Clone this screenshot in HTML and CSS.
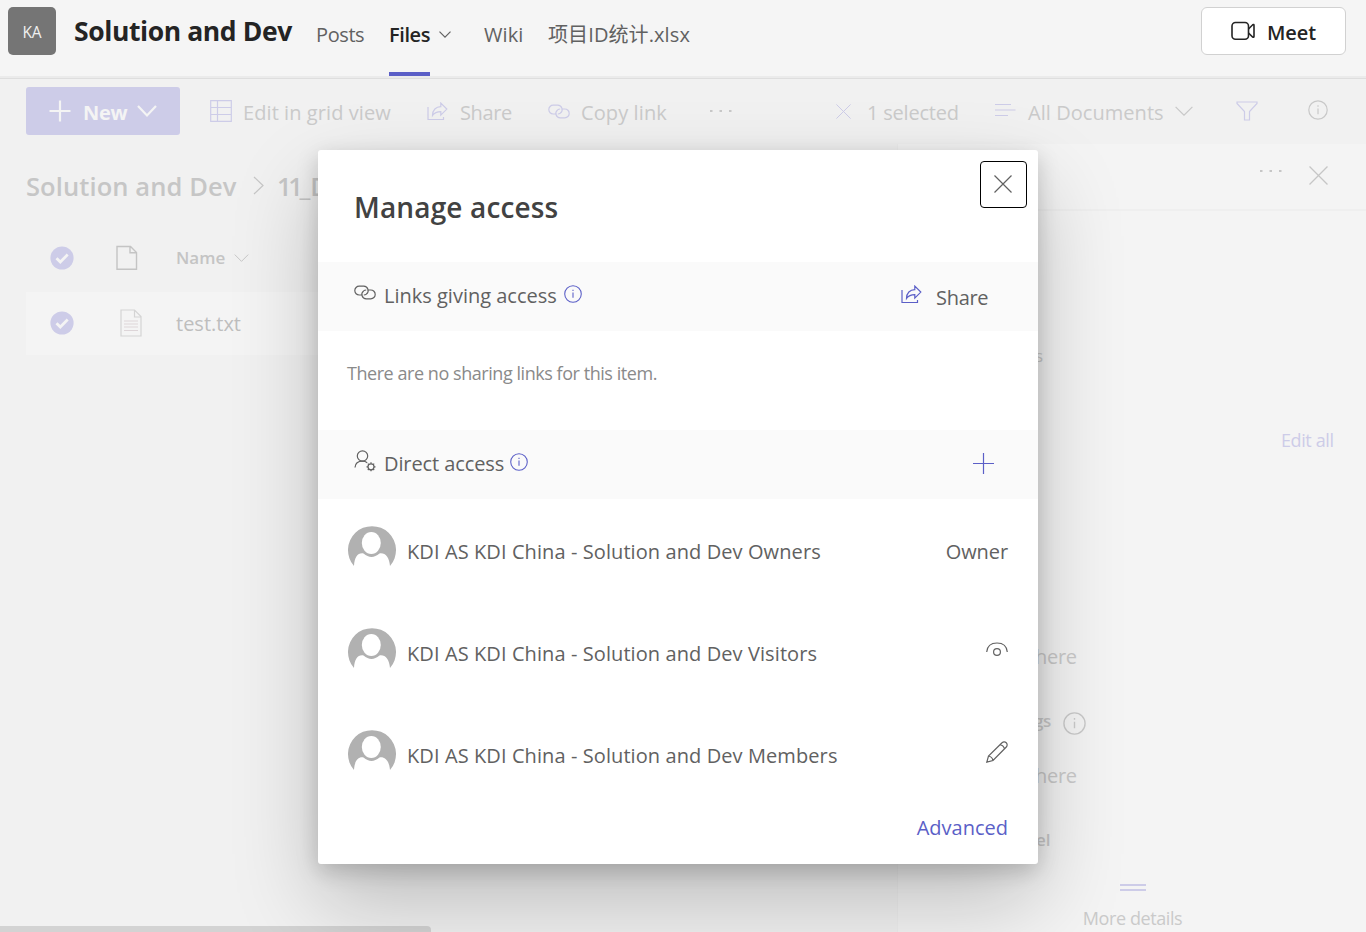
FILE: index.html
```html
<!DOCTYPE html>
<html lang="en">
<head>
<meta charset="utf-8">
<title>Solution and Dev</title>
<link rel="stylesheet" href="styles.css">
</head>
<body>
<svg class="defs" width="0" height="0">
  <symbol id="link" viewBox="0 0 22 15"><path d="M8.500 10H5.200a4.400 4.400 0 1 1 0-8.800h4.600a4.400 4.400 0 0 1 2.600 7.900q-1 .9-2.600.9M13.500 5h3.300a4.400 4.400 0 1 1 0 8.800h-4.600A4.400 4.400 0 0 1 9.600 5.900q1-.9 2.600-.9"/></symbol>
  <symbol id="share" viewBox="0 0 21 19"><path d="M1 5v12.500h15.500V15M5.500 13.500C5.500 8 9 4.600 13.800 4.600V1.100l6 6-6 6V9.600C10.300 9.600 7.600 10.500 5.500 13.500z"/></symbol>
  <symbol id="info" viewBox="0 0 20 20"><circle cx="10" cy="10" r="9.200"/><path d="M10 8.400v5.800M10 5.300v1.500"/></symbol>
  <symbol id="cross" viewBox="0 0 18 18"><path d="M.5.5l17 17M17.500.5l-17 17"/></symbol>
  <symbol id="chev" viewBox="0 0 18 10"><path d="M.6.8L9 9.200 17.400.8"/></symbol>
  <symbol id="check" viewBox="0 0 24 24"><circle cx="12" cy="12" r="11.600" fill="#cdcce8" stroke="none"/><path d="M6.500 12.200l3.800 3.800 7.400-7.400" stroke="#f4f4f4" stroke-width="2.800"/></symbol>
  <symbol id="person" viewBox="0 0 48 48"><path d="M6 40A24 24 0 1 1 42 40C41.300 31 37 26.500 31.500 27.500C26 32 21 32 15.500 27.500C10 26.500 6.500 31 6 40z" fill="#b1b1b1" stroke="none"/><ellipse cx="23.300" cy="17" rx="9.500" ry="11" fill="#fff" stroke="none"/></symbol>
</svg>
<header class="top">
  <div class="logo">KA</div>
  <h1 class="team">Solution and Dev</h1>
  <nav class="tabs">
    <a class="tab posts">Posts</a>
    <a class="tab files">Files</a>
    <svg class="tabchev" viewBox="0 0 12 7"><path d="M.5.6L6 6.100 11.500.6"/></svg>
    <a class="tab wiki">Wiki</a>
    <a class="tab sheet">项目ID统计.xlsx</a>
  </nav>
  <button class="meet"><svg width="24" height="20" viewBox="0 0 24 20"><rect x="1" y="1.500" width="16.500" height="16.800" rx="3.500"/><path d="M17.500 8l4.200-4.200q1.300-.8 1.300.7v10.800q0 1.500-1.300.7L17.500 12"/></svg><span>Meet</span></button>
</header>
<main class="content">
  <div class="toolbar">
    <button class="new"><svg width="22" height="22" viewBox="0 0 22 22"><path d="M11 .5v21M.5 11h21"/></svg><span>New</span><svg class="newchev" width="20" height="12" viewBox="0 0 20 12"><path d="M1 1l9 9.500L19 1"/></svg></button>
    <svg class="i grid" viewBox="0 0 22 22"><path d="M.7.700h20.600v20.600H.700zM7.500.7v20.600M.7 7.500h20.600M.7 14.500h20.600"/></svg>
    <span class="t t-edit">Edit in grid view</span>
    <svg class="i ishare"><use href="#share"/></svg>
    <span class="t t-share">Share</span>
    <svg class="i ilink"><use href="#link"/></svg>
    <span class="t t-copy">Copy link</span>
    <svg class="i dots gray" viewBox="0 0 24 4"><path d="M1 2h2.500M10.500 2H13M20 2h2.500"/></svg>
    <svg class="i clear"><use href="#cross"/></svg>
    <span class="t t-sel">1 selected</span>
    <svg class="i lines" viewBox="0 0 22 14"><path d="M1 1.500h16M1 7h20.500M1 12.500h13"/></svg>
    <span class="t t-all">All Documents</span>
    <svg class="i allchev gray"><use href="#chev"/></svg>
    <svg class="i filter" viewBox="0 0 22 20"><path d="M1 1h20v1.500l-7.500 8V19h-5v-8.500L1 2.500z"/></svg>
    <svg class="i inf gray"><use href="#info"/></svg>
  </div>
  <div class="body">
    <section class="list">
      <div class="crumbs"><span class="c1">Solution and Dev</span><svg width="11" height="19" viewBox="0 0 11 19"><path d="M1 1l9 8.500L1 18"/></svg><span class="c2"><b>11</b>_D</span></div>
      <div class="row head"><svg class="ck"><use href="#check"/></svg><svg class="doc" width="22" height="26" viewBox="0 0 22 26"><path d="M1 1.500h13.500l6 6v16.800H1zM14 1.500v6.300h6.500" stroke-width="1.400"/></svg><span>Name</span><svg class="namechev"><use href="#chev"/></svg></div>
      <div class="row item"><svg class="ck"><use href="#check"/></svg><svg class="doc2" width="22" height="28" viewBox="0 0 22 28"><path d="M1 1h13.500L21 7.500V27H1zM14.500 1v7H21" stroke="#d4d4d4"/><path d="M4 12h14M4 15h14M4 18h14M4 21.500h14" stroke="#ddd5d8"/></svg><span>test.txt</span></div>
      <div class="scroll"></div>
    </section>
    <aside class="panel">
      <div class="phead"><svg class="pdots" viewBox="0 0 24 4"><path d="M1 2h2.500M10.500 2H13M20 2h2.500"/></svg><svg class="pclose"><use href="#cross"/></svg></div>
      <div class="pline p1">s</div>
      <div class="pline p2">Edit all</div>
      <div class="pline p3">here</div>
      <div class="pline p4"><span>gs</span><svg width="23" height="23"><use href="#info"/></svg></div>
      <div class="pline p5">here</div>
      <div class="pline p6">el</div>
      <div class="more"><i class="bars"></i><span>More details</span></div>
    </aside>
  </div>
  <div class="dialog">
    <div class="dhead"><h2>Manage access</h2><button class="close"><svg width="18" height="18"><use href="#cross"/></svg></button></div>
    <div class="band"><svg class="blink"><use href="#link"/></svg><span class="b1">Links giving access</span><svg class="binfo"><use href="#info"/></svg><svg class="bshare"><use href="#share"/></svg><span class="b2">Share</span></div>
    <p class="none">There are no sharing links for this item.</p>
    <div class="band"><svg class="buser" viewBox="0 0 23 22"><circle cx="8.500" cy="6" r="5.200"/><path d="M1 17.500C1.300 13.500 4 11.200 8.500 11.200c2 0 3.500.5 4.700 1.500"/><circle cx="17" cy="16.800" r="3"/><path d="M17 12.300v1.500M17 19.800v1.500M12.500 16.800H14M20 16.800h1.500M13.800 13.600l1.100 1.100M19.100 18.900l1.100 1.100M20.200 13.600l-1.100 1.100M14.900 18.900L13.800 20"/></svg><span class="b3">Direct access</span><svg class="binfo"><use href="#info"/></svg><svg class="bplus" viewBox="0 0 22 22"><path d="M10.500 0v21M0 10.500h21"/></svg></div>
    <div class="member"><svg class="av"><use href="#person"/></svg><span class="name">KDI AS KDI China - Solution and Dev Owners</span><span class="role">Owner</span></div>
    <div class="member"><svg class="av"><use href="#person"/></svg><span class="name">KDI AS KDI China - Solution and Dev Visitors</span><svg class="perm eye" viewBox="0 0 22 15"><path d="M.7 10C1.200 4.500 5 1 11 1s9.800 3.500 10.300 9"/><circle cx="11" cy="10" r="3.400"/></svg></div>
    <div class="member"><svg class="av"><use href="#person"/></svg><span class="name">KDI AS KDI China - Solution and Dev Members</span><svg class="perm pen" viewBox="0 0 22 22"><path d="M.8 21.200L2.500 15 16 1.800a2.900 2.900 0 0 1 4.300 4.200L7 19.500zM2.500 15q3.800.8 4.500 4.500M14 3.600q3.800.8 4.500 4.500"/></svg></div>
    <div class="foot"><a>Advanced</a></div>
  </div>
</main>
</body>
</html>
```
FILE: styles.css
```css
* { box-sizing: border-box; }
body { margin: 0; width: 1366px; height: 932px; overflow: hidden; display: flex; flex-direction: column; background: #f1f1f1; font-family: "Open Sans", "Noto Sans", "Noto Sans CJK SC", sans-serif; font-size: 20px; color: #616161; white-space: nowrap; }
svg { fill: none; stroke: currentColor; stroke-width: 1.2; flex: none; overflow: visible; display: block; }
.defs { position: absolute; }
button { font: inherit; padding: 0; border: 0; display: flex; align-items: center; text-align: left; }
h1, h2, p { margin: 0; }
span, .tab { flex: none; }

.top { height: 79px; flex: none; display: flex; background: #f5f5f5; border-bottom: 1px solid #dedede; box-shadow: inset 0 -2px #ebebeb; }
.logo { width: 48px; height: 48px; margin: 7px 0 0 8px; border-radius: 5px; background: #757575; color: #f0f0f0; font-size: 15.500px; letter-spacing: -.2px; line-height: 51px; text-align: center; }
.team { width: 242px; margin-left: 18px; font-size: 26.500px; font-weight: 700; line-height: 63px; letter-spacing: -.4px; color: #242424; }
.tabs { display: flex; height: 76px; line-height: 70px; letter-spacing: -.4px; }
.posts { width: 73px; }
.files { width: 41px; color: #242424; font-weight: 600; border-bottom: 4px solid #5b5fc7; }
.tabchev { width: 12px; height: 7px; margin: 31px 33px 0 9px; }
.wiki { width: 64px; letter-spacing: .1px; }
.sheet { letter-spacing: .1px; }
.meet { width: 145px; height: 48px; margin: 7px 20px 0 auto; padding-left: 29px; gap: 12px; background: #fff; border: 1px solid #d1d1d1; border-radius: 6px; color: #242424; font-weight: 600; letter-spacing: -.1px; }
.meet svg { stroke-width: 1.600; }
.meet span { padding-top: 2px; }

.content { position: relative; flex: 1; display: flex; flex-direction: column; overflow: hidden; color: #cacaca; }
.toolbar { height: 65px; flex: none; display: flex; align-items: center; padding: 0 0 1px 26px; }
.new { width: 154px; height: 48px; padding-left: 23px; background: #cdcce8; border-radius: 3px; color: #f4f4f4; font-weight: 700; letter-spacing: -.3px; }
.new span { width: 54px; margin-left: 12px; padding-top: 2px; }
.new svg { stroke-width: 2.200; }
.i { color: #cdcce8; }
.gray { color: #c8c8c8; }
.t { padding-top: 2px; }
.grid { width: 22px; height: 22px; margin: 0 11px 0 30px; }
.t-edit { width: 184px; letter-spacing: .08px; }
.ishare { width: 21px; height: 19px; margin-right: 12px; }
.t-share { width: 88px; letter-spacing: -.35px; }
.ilink { width: 22px; height: 15px; margin-right: 11px; }
.t-copy { width: 128px; letter-spacing: .1px; }
.dots { width: 24px; height: 4px; margin-right: 103px; stroke-width: 2; }
.clear { width: 15px; height: 15px; margin-right: 16px; }
.t-sel { width: 127px; letter-spacing: -.2px; }
.lines { width: 22px; height: 14px; margin-right: 12px; margin-top: -2px; }
.t-all { width: 147px; letter-spacing: .05px; }
.allchev { width: 18px; height: 10px; margin-right: 43px; }
.filter { width: 22px; height: 20px; margin-right: 50px; }
.inf { width: 20px; height: 20px; margin-top: -2px; }

.body { flex: 1; display: flex; min-height: 0; }
.list { width: 897px; display: flex; flex-direction: column; }
.crumbs { height: 82px; padding: 0 0 0 26px; display: flex; align-items: center; font-weight: 600; font-size: 25.500px; color: #c6c6c6; }
.crumbs svg { margin-right: 13px; margin-left: -1px; }
.c1 { width: 228px; letter-spacing: .1px; padding-top: 2px; }
.c2 { padding-top: 2px; }
.c2 b { font-weight: inherit; letter-spacing: -3.400px; }
.row { display: flex; align-items: center; margin-left: 26px; padding-left: 24px; height: 63px; }
.head { height: 66px; padding-bottom: 2px; font-size: 17px; font-weight: 600; color: #c4c4c4; }
.head span { width: 58px; padding-bottom: 1px; margin-left: -1px; }
.item { background: #f4f4f4; padding-bottom: 2px; font-weight: 500; color: #bebebe; }
.item span { padding-top: 2px; }
.ck { width: 24px; height: 24px; }
.doc { margin: 0 39px 0 42px; }
.doc2 { margin: 0 34px 0 46px; }
.namechev { width: 15px; height: 8px; }
.scroll { width: 431px; height: 6px; margin-top: auto; background: #d3d3d3; border-radius: 0 4px 0 0; }

.panel { flex: 1; display: flex; flex-direction: column; background: #f4f4f4; border-left: 1px solid #eee; padding-left: 1px; }
.phead { height: 67px; display: flex; border-bottom: 2px solid #efefef; color: #c6c6c6; }
.pdots { width: 24px; height: 4px; margin: 25px 26px 0 360px; stroke-width: 2; }
.pclose { width: 19px; height: 19px; margin-top: 22px; }
.pline { display: flex; height: 40px; align-items: center; margin-left: 139px; }
.p1 { margin-top: 124px; font-size: 17px; margin-left: 136px; }
.p2 { margin-top: 45px; margin-left: 382px; font-size: 18px; color: #cdcce8; letter-spacing: -.4px; }
.p3 { margin-top: 176px; margin-left: 136px; letter-spacing: -.3px; }
.p4 { margin-top: 27px; margin-left: 135px; font-size: 17px; font-weight: 600; }
.p4 span { width: 29px; height: 25px; letter-spacing: -.3px; line-height: 19px; }
.p5 { margin-top: 12px; margin-left: 136px; letter-spacing: -.3px; }
.p6 { margin-top: 24px; margin-left: 137px; font-size: 17px; font-weight: 600; }
.more { display: flex; flex-direction: column; align-items: center; margin-top: 25px; font-size: 18px; letter-spacing: -.4px; }
.bars { width: 26px; height: 7px; margin-bottom: 15px; border: solid #cdcce8; border-width: 2px 0; }

.dialog { position: absolute; left: 318px; top: 71px; width: 720px; height: 714px; background: #fff; border-radius: 3px; color: #616161; box-shadow: 0 38px 86px rgba(0,0,0,.22), 0 7px 22px rgba(0,0,0,.18); }
.dhead { height: 112px; display: flex; justify-content: space-between; padding: 11px 11px 0 36px; }
h2 { font-size: 28px; font-weight: 600; line-height: 92px; letter-spacing: .15px; color: #424242; }
.close { width: 47px; height: 47px; padding: 0 2px 2px 0; justify-content: center; background: #fff; border: 1px solid #000; border-radius: 4px; color: #616161; }
.band { height: 69px; display: flex; align-items: center; padding-left: 36px; background: #fafafa; }
.blink { width: 22px; height: 15px; margin: -8px 8px 0 0; }
.b1 { width: 180px; letter-spacing: 0; margin-top: -2px; }
.binfo { width: 18px; height: 18px; margin-top: -5px; color: #5b5fc7; }
.bshare { width: 21px; height: 19px; margin: -4px 14px 0 319px; color: #5b5fc7; }
.b2 { padding-top: 1px; letter-spacing: -.3px; }
.none { height: 99px; padding: 0 29px; line-height: 84px; font-size: 18px; letter-spacing: -.45px; color: #8a8a8a; }
.buser { width: 23px; height: 22px; margin: -8px 7px 0 0; }
.b3 { width: 126px; letter-spacing: -.1px; margin-top: -2px; }
.bplus { width: 22px; height: 22px; margin: -2px 0 0 445px; color: #5b5fc7; }
.member { height: 102px; display: flex; align-items: center; padding: 0 30px; }
.member span { padding-top: 2px; }
.member .name { letter-spacing: .09px; margin-left: -1px; }
.av { width: 48px; height: 48px; margin-right: 12px; }
.role, .perm { margin-left: auto; }
.role { letter-spacing: -.1px; }
.eye { width: 22px; height: 15px; margin-top: -5px; }
.pen { width: 22px; height: 22px; margin-top: -6px; margin-bottom: -2px; }
.foot { padding: 0 30px; line-height: 45px; text-align: right; color: #5b5fc7; }
```
